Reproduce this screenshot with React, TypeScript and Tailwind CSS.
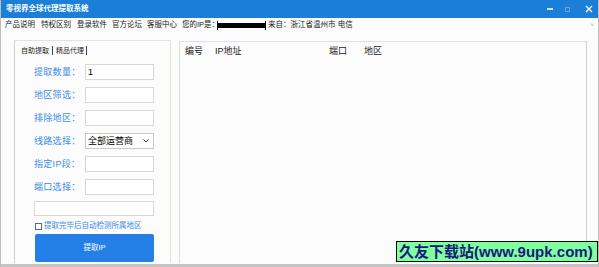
import React from "react";

const F = "font-['Liberation_Sans','Noto_Sans_CJK_SC',sans-serif]";

function Row({ label, children }: { label: string; children: React.ReactNode }) {
  return (
    <div className="flex items-center h-[16px]">
      <div className="w-[51px] text-[9px] tracking-[0.3px] text-[#3a8de6] whitespace-nowrap leading-none">{label}</div>
      {children}
    </div>
  );
}

function Input({ value }: { value?: string }) {
  return (
    <div className="w-[69px] h-[16px] border border-[#d6d9d4] bg-white flex items-center pl-[2px] text-[9px] text-black leading-none">
      {value}
    </div>
  );
}

export default function App() {
  return (
    <div className={`${F} relative w-[599px] h-[267px] overflow-hidden bg-[#fcfcfc] flex flex-col border-l border-r border-[#bdbdbd]`}>
      {/* Title bar */}
      <div className="h-[18px] bg-[#1b7fd8] flex items-center justify-between shrink-0">
        <div className="pl-[5px] text-[7.5px] font-bold text-white leading-none">零视界全球代理提取系统</div>
        <div className="flex items-center h-full">
          <div className="w-[6px] h-[1.5px] bg-white/80 mr-[12px]" />
          <div className="w-[5px] h-[5px] border border-white/30 mr-[15px]" />
          <svg width="8" height="8" viewBox="0 0 8 8" className="mr-[5px]">
            <path d="M1 1 L7 7 M7 1 L1 7" stroke="white" strokeWidth="1.4" />
          </svg>
        </div>
      </div>

      {/* Menu row */}
      <div className="h-[14px] flex items-center pl-[4px] text-[7.5px] text-[#222] leading-none shrink-0 whitespace-nowrap">
        <span className="w-[36px]">产品说明</span>
        <span className="w-[36px]">特权区别</span>
        <span className="w-[35px]">登录软件</span>
        <span className="w-[35px]">官方论坛</span>
        <span className="w-[35px]">客服中心</span>
        <span>您的IP是：</span>
        <span className="flex items-center ml-[-2px]">
          <span className="w-[1px] h-[9px] bg-black" />
          <span className="w-[47px] h-[5px] bg-black" />
          <span className="w-[1px] h-[9px] bg-black" />
        </span>
        <span className="ml-[2px]">来自：浙江省温州市 电信</span>
        <span className="ml-auto mr-[4px] text-[6px] text-[#999]">˅</span>
      </div>

      {/* Main */}
      <div className="flex pt-[8px] pl-[13px] flex-1 min-h-0">
        {/* Left group */}
        <div className="w-[157px] h-[223px] border-l border-t border-r border-l-[#cfcfcf] border-t-[#e2e2e2] border-r-[#e6dfcf] flex flex-col">
          <div className="flex items-center h-[12px] mt-[3px] pl-[6px] text-[7px] text-[#222] leading-none">
            <span>自助提取</span>
            <span className="w-[1px] h-[9px] bg-[#444] mx-[3px]" />
            <span>精品代理</span>
            <span className="w-[1px] h-[9px] bg-[#444] ml-[2px]" />
          </div>
          <div className="flex flex-col pl-[19px] pt-[8px] gap-[7px]">
            <Row label="提取数量：">
              <Input value="1" />
            </Row>
            <Row label="地区筛选：">
              <Input />
            </Row>
            <Row label="排除地区：">
              <Input />
            </Row>
            <Row label="线路选择：">
              <div className="w-[69px] h-[16px] border border-[#c9c9c9] bg-white flex items-center justify-between pl-[2px] pr-[4px] text-[9px] text-black leading-none">
                <span>全部运营商</span>
                <svg width="6" height="4" viewBox="0 0 6 4">
                  <path d="M0.5 0.5 L3 3 L5.5 0.5" stroke="#333" strokeWidth="1" fill="none" />
                </svg>
              </div>
            </Row>
            <Row label="指定IP段：">
              <Input />
            </Row>
            <Row label="端口选择：">
              <Input />
            </Row>
          </div>
          <div className="ml-[19px] mt-[6px] w-[120px] h-[15px] border border-[#d9d9cf] bg-white" />
          <div className="ml-[20px] mt-[6px] flex items-center h-[8px]">
            <div className="w-[7px] h-[7px] border border-[#4b6b9b] bg-white" />
            <span className="ml-[2px] text-[7.5px] text-[#3a8de6] leading-none whitespace-nowrap">提取完毕后自动检测所属地区</span>
          </div>
          <div className="ml-[20px] mt-[4px] w-[119px] h-[28px] bg-[#2480e6] rounded-[2px] flex items-center justify-center text-white text-[7.5px] leading-none">
            提取IP
          </div>
        </div>

        {/* Right list panel */}
        <div className="ml-[8px] mt-[1px] w-[408px] h-[222px] border-l border-t border-r border-l-[#d6e2da] border-t-[#e2dcef] border-r-[#cfcfcf] bg-[#fcfcfc]">
          <div className="flex items-center h-[16px] mt-[1px] pl-[5px] text-[9px] text-[#222] leading-none">
            <span className="w-[30px]">编号</span>
            <span className="w-[114px]">IP地址</span>
            <span className="w-[35px]">端口</span>
            <span>地区</span>
          </div>
        </div>
      </div>

      {/* Bottom border */}
      <div className="h-[3px] bg-[#c4c4c4] shrink-0" />

      {/* Watermark */}
      <div className="absolute left-[395px] top-[241px] w-[202px] h-[21px] bg-[#80ff9f] border border-black flex items-center pl-[2px] text-[15px] font-bold text-[#1a1a7e] leading-none whitespace-nowrap">
        久友下载站(www.9upk.com)
      </div>
    </div>
  );
}
